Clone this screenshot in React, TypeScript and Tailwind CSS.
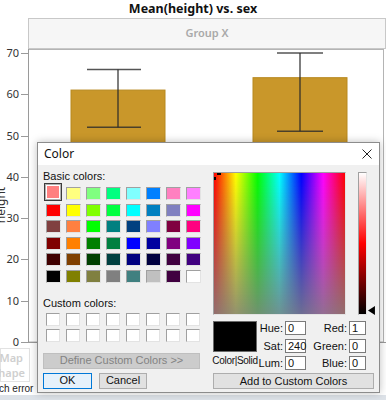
import React from 'react';

const basic = [
  ['bg-[#ff8080]', 'bg-[#ffff80]', 'bg-[#80ff80]', 'bg-[#00ff80]', 'bg-[#80ffff]', 'bg-[#0080ff]', 'bg-[#ff80c0]', 'bg-[#ff80ff]'],
  ['bg-[#ff0000]', 'bg-[#ffff00]', 'bg-[#80ff00]', 'bg-[#00ff40]', 'bg-[#00ffff]', 'bg-[#0080c0]', 'bg-[#8080c0]', 'bg-[#ff00ff]'],
  ['bg-[#804040]', 'bg-[#ff8040]', 'bg-[#00ff00]', 'bg-[#008080]', 'bg-[#004080]', 'bg-[#8080ff]', 'bg-[#800040]', 'bg-[#ff0080]'],
  ['bg-[#800000]', 'bg-[#ff8000]', 'bg-[#008000]', 'bg-[#008040]', 'bg-[#0000ff]', 'bg-[#0000a0]', 'bg-[#800080]', 'bg-[#8000ff]'],
  ['bg-[#400000]', 'bg-[#804000]', 'bg-[#004000]', 'bg-[#004040]', 'bg-[#000080]', 'bg-[#000040]', 'bg-[#400040]', 'bg-[#400080]'],
  ['bg-[#000000]', 'bg-[#808000]', 'bg-[#808040]', 'bg-[#808080]', 'bg-[#408080]', 'bg-[#c0c0c0]', 'bg-[#400040]', 'bg-[#ffffff]'],
];

const ticks = [70, 60, 50, 40, 30, 20, 10, 0];
const yOf = (v: number) => 342 - v * 4.13;

function Chart() {
  return (
    <svg width="386" height="299" viewBox="0 49 386 299" className="block overflow-visible">
      <rect x="28.5" y="49.5" width="355" height="292.5" fill="#fff" stroke="#b4b4b4" />
      <line x1="28.5" y1="49" x2="28.5" y2="342" stroke="#9a9a9a" />
      <line x1="21" y1="342.5" x2="386" y2="342.5" stroke="#9a9a9a" />
      {ticks.map((t) => (
        <g key={t}>
          <line x1="21" x2="28" y1={Math.round(yOf(t)) + 0.5} y2={Math.round(yOf(t)) + 0.5} stroke="#9a9a9a" />
          <text x="19" y={yOf(t) + 4} textAnchor="end" fontSize="11" fill="#333" fontFamily="'Noto Sans', sans-serif">
            {t}
          </text>
        </g>
      ))}
      <text transform="translate(5,205) rotate(-90)" textAnchor="middle" fontSize="12" fill="#333" fontFamily="'Noto Sans', sans-serif">
        height
      </text>
      {/* bars */}
      <rect x="71" y={yOf(61)} width="94" height={342 - yOf(61)} fill="#c9972a" stroke="#b8891f" />
      <rect x="253" y={yOf(64)} width="94" height={342 - yOf(64)} fill="#c9972a" stroke="#b8891f" />
      {/* error bars */}
      <g stroke="#2a2a2a" strokeOpacity="0.8" strokeWidth="1.5">
        <line x1="118" x2="118" y1={yOf(66)} y2={yOf(52)} />
        <line x1="87" x2="141" y1={yOf(66)} y2={yOf(66)} />
        <line x1="87" x2="141" y1={yOf(52)} y2={yOf(52)} />
        <line x1="300" x2="300" y1={yOf(70)} y2={yOf(51)} />
        <line x1="277" x2="323" y1={yOf(70)} y2={yOf(70)} />
        <line x1="277" x2="323" y1={yOf(51)} y2={yOf(51)} />
      </g>
    </svg>
  );
}

function Sunken({ className, children }: { className: string; children?: React.ReactNode }) {
  return (
    <div className={`border border-t-[#a0a0a0] border-l-[#a0a0a0] border-r-[#e3e3e3] border-b-[#e3e3e3] ${className}`}>
      {children}
    </div>
  );
}

function Field({ label, value }: { label: string; value: string }) {
  return (
    <>
      <span className="text-right leading-[14px]">{label}</span>
      <div className="h-[14px] bg-white border border-[#7a7a7a] pl-[2px] leading-[12px] text-[#111]">{value}</div>
    </>
  );
}

function ColorDialog() {
  return (
    <div className="absolute left-[37px] top-[142px] w-[343px] h-[251px] border border-[#8c8c8c] bg-[#f0f0f0] shadow-[0_0_8px_rgba(0,0,0,0.25)] flex flex-col text-[11px] text-[#111] font-['Liberation_Sans',Arial,sans-serif]">
      <div className="h-[22px] bg-white flex items-center justify-between pl-[6px] pr-[7px]">
        <span className="text-[12px] font-['Noto_Sans',sans-serif] text-[#111]">Color</span>
        <svg width="10" height="10" viewBox="0 0 10 10">
          <path d="M0.5 0.5 L9.5 9.5 M9.5 0.5 L0.5 9.5" stroke="#222" strokeWidth="1" />
        </svg>
      </div>
      <div className="flex flex-1 items-start pl-[5px]">
        {/* left column */}
        <div className="w-[170px] flex flex-col pt-[5px]">
          <div className="h-[13px] leading-[13px]">Basic colors:</div>
          <div className="mt-[1px] grid grid-cols-[repeat(8,20px)] auto-rows-[16.6px]">
            {basic.flat().map((c, i) => (
              <div key={i} className="relative flex justify-center pt-[3px]">
                <Sunken className={`w-[15px] h-[13px] ${c}`} />
                {i === 0 && (
                  <div className="absolute left-[1px] -top-[1px] w-[18px] h-[18px] border border-[#3c3c3c] p-[1px] bg-[#b0b0b0]">
                    <div className="w-full h-full border border-white bg-[#ff8080]" />
                  </div>
                )}
              </div>
            ))}
          </div>
          <div className="mt-[13px] h-[13px] leading-[13px]">Custom colors:</div>
          <div className="mt-[1px] grid grid-cols-[repeat(8,20px)] auto-rows-[16px]">
            {Array.from({ length: 16 }).map((_, i) => (
              <div key={i} className="flex justify-center pt-[2px]">
                <Sunken className="w-[14px] h-[13px] bg-white" />
              </div>
            ))}
          </div>
          <div className="mt-[10px] w-[157px] h-[16px] bg-[#cccccc] border border-[#bfbfbf] flex items-center justify-center text-[#838383]">
            Define Custom Colors &gt;&gt;
          </div>
          <div className="mt-[4px] flex gap-[7px]">
            <div className="w-[49px] h-[16px] bg-[#e5f1fb] border border-[#0078d7] flex items-center justify-center">OK</div>
            <div className="w-[48px] h-[16px] bg-[#e1e1e1] border border-[#adadad] flex items-center justify-center">Cancel</div>
          </div>
        </div>
        {/* right column */}
        <div className="w-[162px] flex flex-col pt-[7px]">
          <div className="flex items-start">
            <Sunken className="relative w-[134px] h-[143px] bg-[image:linear-gradient(to_bottom,rgba(128,128,128,0),rgba(128,128,128,0.85)),linear-gradient(to_right,#ff0000,#ffff00,#00ff00,#00ffff,#0000ff,#ff00ff,#ff0000)]">
              <div className="absolute left-[3px] top-0 w-[4px] h-[2px] bg-black" />
              <div className="absolute left-0 top-[4px] w-[2px] h-[3px] bg-black" />
            </Sunken>
            <Sunken className="ml-[12px] w-[9px] h-[143px] bg-[linear-gradient(to_bottom,#ffffff,#ff0000_50%,#000000)]" />
            <svg width="7" height="9" viewBox="0 0 7 9" className="mt-[134px] ml-[1px]">
              <path d="M7 0 L0 4.5 L7 9 Z" fill="#000" />
            </svg>
          </div>
          <div className="mt-[6px] flex items-start">
            <div className="w-[44px] flex flex-col items-center">
              <div className="w-[44px] h-[31px] bg-black border border-[#6a6a6a]" />
              <span className="mt-[2px] text-[10px] leading-[13px] tracking-[-0.3px] whitespace-nowrap">Color|Solid</span>
            </div>
            <div className="grid grid-cols-[26px_21px_39px_17px] gap-x-[2px] gap-y-[3.5px] auto-rows-[14px]">
              <Field label="Hue:" value="0" />
              <Field label="Red:" value="1" />
              <Field label="Sat:" value="240" />
              <Field label="Green:" value="0" />
              <Field label="Lum:" value="0" />
              <Field label="Blue:" value="0" />
            </div>
          </div>
          <div className="mt-[3px] w-[161px] h-[16px] bg-[#e1e1e1] border border-[#adadad] flex items-center justify-center">
            Add to Custom Colors
          </div>
        </div>
      </div>
    </div>
  );
}

export default function App() {
  return (
    <div className="relative w-[386px] h-[400px] overflow-hidden bg-white font-['Noto_Sans',sans-serif] text-[#222]">
      <div className="h-[18px] text-center text-[12.5px] font-bold leading-[18px] text-[#111]">Mean(height) vs. sex</div>
      <div className="flex">
        <div className="w-[28px]" />
        <div className="flex-1 h-[31px] border border-[#c8c8c8] bg-[#f6f6f6] flex items-center justify-center text-[11px] font-semibold text-[#a9a9a9]">
          Group X
        </div>
      </div>
      <Chart />
      <div className="flex flex-col h-[47px]">
        <div className="w-[30px] h-[34px] border border-[#e2e2e2] flex flex-col items-end justify-center pr-[6px] text-[11px] leading-[15px] text-[#cfcfcf] font-semibold">
          <span>Map</span>
          <span className="-mr-[2px]">hape</span>
        </div>
        <div className="mt-[1px] -ml-[1px] text-[10px] leading-[12px] text-[#222] whitespace-nowrap font-['Liberation_Sans',Arial,sans-serif]">ch error</div>
      </div>
      <div className="h-[6px] bg-[#dde2e8]" />
      <ColorDialog />
    </div>
  );
}
